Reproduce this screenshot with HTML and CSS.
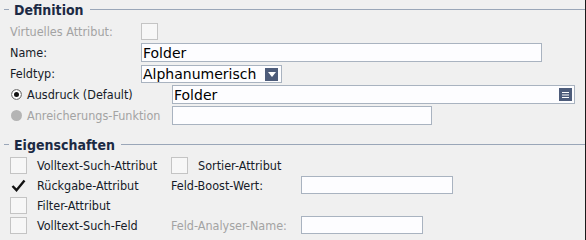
FILE: index.html
```html
<!DOCTYPE html>
<html lang="de">
<head>
  <meta charset="UTF-8">
  <title>Attribut bearbeiten</title>
  <link rel="stylesheet" href="styles.css">
</head>
<body>

<div class="panel">
  <div class="group-head">
    <span class="dash"></span>
    <span class="group-title">Definition</span>
    <span class="rule"></span>
  </div>

  <div class="form">
    <div class="row">
      <label class="label disabled">Virtuelles Attribut:</label>
      <span class="check"></span>
    </div>
    <div class="row">
      <label class="label">Name:</label>
      <div class="field name-field">Folder</div>
    </div>
    <div class="row">
      <label class="label">Feldtyp:</label>
      <div class="field select-field">
        Alphanumerisch
        <span class="drop-btn">
          <svg width="8" height="5" viewBox="0 0 8 5"><path d="M0 0h8L4 5z" fill="#fff"/></svg>
        </span>
      </div>
    </div>
    <div class="row radio-row">
      <label class="label radio-label"><span class="radio on"></span>Ausdruck (Default)</label>
      <div class="field expr-field">
        Folder
        <span class="menu-btn">
          <svg width="7" height="6" viewBox="0 0 7 6"><path d="M0 0.5h7M0 3h7M0 5.5h7" stroke="#fff" stroke-width="1"/></svg>
        </span>
      </div>
    </div>
    <div class="row radio-row">
      <label class="label radio-label disabled"><span class="radio off"></span>Anreicherungs-Funktion</label>
      <div class="field enrich-field"></div>
    </div>
  </div>

  <div class="group-head second">
    <span class="dash"></span>
    <span class="group-title">Eigenschaften</span>
    <span class="rule"></span>
  </div>

  <div class="props">
    <div class="prop-row">
      <span class="check"></span>
      <span class="prop-label">Volltext-Such-Attribut</span>
      <span class="check"></span>
      <span class="prop-label sort-label">Sortier-Attribut</span>
    </div>
    <div class="prop-row">
      <span class="check plain">
        <svg width="15" height="13" viewBox="0 0 15 13"><path d="M1.5 7l4 4.2L13.5 1.5" fill="none" stroke="#111" stroke-width="2.4"/></svg>
      </span>
      <span class="prop-label">Rückgabe-Attribut</span>
      <span class="prop-label wide">Feld-Boost-Wert:</span>
      <div class="field boost-field"></div>
    </div>
    <div class="prop-row">
      <span class="check"></span>
      <span class="prop-label">Filter-Attribut</span>
    </div>
    <div class="prop-row">
      <span class="check"></span>
      <span class="prop-label">Volltext-Such-Feld</span>
      <span class="prop-label wide disabled">Feld-Analyser-Name:</span>
      <div class="field analyser-field"></div>
    </div>
  </div>
</div>

</body>
</html>
```

FILE: styles.css
```css
body {
  margin: 0;
  padding: 0;
  background-color: #f0f0f0;
  font-family: "DejaVu Sans Condensed", "DejaVu Sans", sans-serif;
  font-size: 12.5px;
  color: #161b28;
}

.panel {
  width: 585px;
  height: 240px;
  border-right: 1px solid #1a1a1a;
  box-sizing: content-box;
}

.group-head {
  display: flex;
  align-items: center;
  height: 19px;
  padding-left: 4px;
}

.group-head.second {
  margin-top: 9px;
}

.dash {
  width: 5px;
  height: 1px;
  background-color: #9aa6b8;
}

.group-title {
  font-size: 14px;
  font-weight: bold;
  color: #1c2a44;
  padding: 0 6px 0 5px;
}

.rule {
  flex: 1;
  height: 1px;
  background-color: #9aa6b8;
}

.form {
  padding-left: 10px;
}

.row {
  display: flex;
  align-items: center;
  height: 21px;
}

.row:first-child {
  margin-top: 1px;
  height: 22px;
}

.label {
  width: 131px;
  flex: none;
}

.radio-label {
  width: 162px;
  display: flex;
  align-items: center;
}

.disabled {
  color: #a3a3a3;
}

.check {
  width: 15px;
  height: 15px;
  border: 1px solid #c4c4c4;
  background-color: #f7f7f7;
  display: inline-flex;
  align-items: center;
  justify-content: center;
  flex: none;
}

.check.plain {
  border-color: transparent;
  background-color: transparent;
}

.radio {
  width: 11px;
  height: 11px;
  border-radius: 50%;
  margin: 0 5px 0 1px;
  box-sizing: border-box;
}

.radio.on {
  background-color: #fff;
  border: 1px solid #777;
  box-shadow: inset 0 0 0 2px #fff, inset 0 0 0 5px #111;
}

.radio.off {
  background-color: #b4b4b4;
}

.field {
  height: 17px;
  border: 1px solid #a9b3c0;
  background-color: #fdfdff;
  display: flex;
  align-items: center;
  padding-left: 1px;
  font-family: "DejaVu Sans", sans-serif;
  font-size: 14px;
  color: #000;
  box-sizing: content-box;
  position: relative;
}

.name-field {
  width: 398px;
}

.select-field {
  width: 138px;
  height: 16px;
}

.drop-btn {
  position: absolute;
  right: 3px;
  top: 2px;
  width: 13px;
  height: 13px;
  background-color: #4d5c7a;
  display: flex;
  align-items: center;
  justify-content: center;
}

.expr-field {
  width: 400px;
}

.menu-btn {
  position: absolute;
  right: 2px;
  top: 2px;
  width: 13px;
  height: 13px;
  background-color: #4d5c7a;
  display: flex;
  align-items: center;
  justify-content: center;
}

.enrich-field {
  width: 257px;
}

.props {
  padding-left: 10px;
  padding-top: 1px;
}

.prop-row {
  display: flex;
  align-items: center;
  height: 20px;
}

.prop-label {
  width: 134px;
  padding-left: 10px;
  box-sizing: border-box;
  flex: none;
}

.prop-label:nth-child(2) {
  width: 144px;
  padding-left: 10px;
}

.sort-label {
  width: auto;
}

.prop-label.wide {
  width: 130px;
  padding-left: 0;
}

.boost-field {
  width: 149px;
  height: 16px;
}

.analyser-field {
  width: 119px;
  height: 16px;
}
```
